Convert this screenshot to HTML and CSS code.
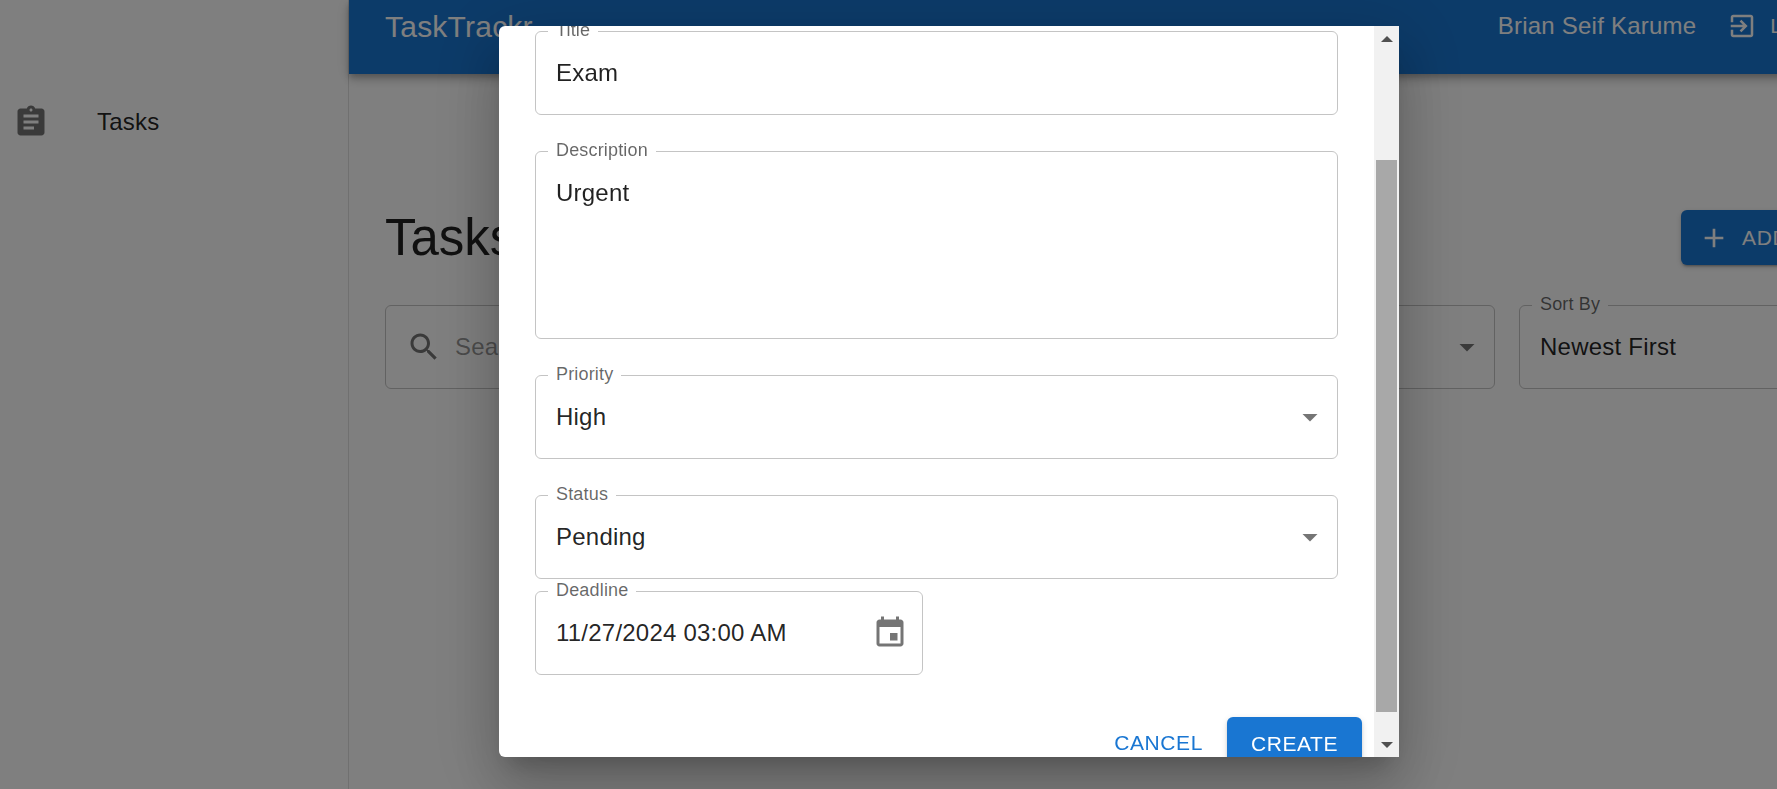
FILE: index.html
```html
<!DOCTYPE html>
<html lang="en">
<head>
    <meta charset="UTF-8">
    <title>TaskTrackr</title>
    <link rel="stylesheet" href="styles.css">
</head>
<body>
    <div class="app">
        <aside class="sidebar">
            <div class="nav-item">
                <svg class="icon-lg nav-icon" viewBox="0 0 24 24"><path d="M19 3h-4.18C14.4 1.84 13.3 1 12 1c-1.3 0-2.4.84-2.82 2H5c-1.1 0-2 .9-2 2v14c0 1.1.9 2 2 2h14c1.1 0 2-.9 2-2V5c0-1.1-.9-2-2-2zm-7 0c.55 0 1 .45 1 1s-.45 1-1 1-1-.45-1-1 .45-1 1-1zm2 14H7v-2h7v2zm3-4H7v-2h10v2zm0-4H7V7h10v2z"/></svg>
                <span>Tasks</span>
            </div>
        </aside>

        <main class="main">
            <header class="topbar">
                <div class="brand">TaskTrackr</div>
                <div class="user">
                    <span class="user-name">Brian Seif Karume</span>
                    <button class="logout">
                        <svg class="icon-md" viewBox="0 0 24 24"><path d="M10.09 15.59L11.5 17l5-5-5-5-1.41 1.41L12.67 11H3v2h9.67l-2.58 2.59zM19 3H5c-1.11 0-2 .9-2 2v4h2V5h14v14H5v-4H3v4c0 1.1.89 2 2 2h14c1.1 0 2-.9 2-2V5c0-1.1-.9-2-2-2z"/></svg>
                        <span>LOGOUT</span>
                    </button>
                </div>
            </header>

            <section class="content">
                <div class="title-row">
                    <h1>Tasks</h1>
                    <button class="btn btn-primary add-btn">
                        <svg class="icon-add" viewBox="0 0 24 24"><path d="M19 13h-6v6h-2v-6H5v-2h6V5h2v6h6v2z"/></svg>
                        <span>ADD TASK</span>
                    </button>
                </div>
                <div class="filters">
                    <div class="field field-search">
                        <svg class="icon-lg muted" viewBox="0 0 24 24"><path d="M15.5 14h-.79l-.28-.27C15.41 12.59 16 11.11 16 9.5 16 5.91 13.09 3 9.5 3S3 5.91 3 9.5 5.91 16 9.5 16c1.61 0 3.09-.59 4.23-1.57l.27.28v.79l5 4.99L20.49 19l-4.99-5zm-6 0C7.01 14 5 11.99 5 9.5S7.01 5 9.5 5 14 7.01 14 9.5 11.99 14 9.5 14z"/></svg>
                        <span class="placeholder">Search tasks</span>
                    </div>
                    <div class="field field-filter">
                        <label>Filter</label>
                        <span class="value">All</span>
                        <svg class="icon-lg muted caret" viewBox="0 0 24 24"><path d="M7 10l5 5 5-5z"/></svg>
                    </div>
                    <div class="field field-filter">
                        <label>Sort By</label>
                        <span class="value">Newest First</span>
                        <svg class="icon-lg muted caret" viewBox="0 0 24 24"><path d="M7 10l5 5 5-5z"/></svg>
                    </div>
                </div>
            </section>
        </main>
    </div>

    <div class="backdrop">
        <div class="dialog">
            <div class="dialog-body">
                <div class="field">
                    <label>Title</label>
                    <span class="value">Exam</span>
                </div>
                <div class="field field-area">
                    <label>Description</label>
                    <span class="value">Urgent</span>
                </div>
                <div class="field">
                    <label>Priority</label>
                    <span class="value">High</span>
                    <svg class="icon-lg muted caret" viewBox="0 0 24 24"><path d="M7 10l5 5 5-5z"/></svg>
                </div>
                <div class="field">
                    <label>Status</label>
                    <span class="value">Pending</span>
                    <svg class="icon-lg muted caret" viewBox="0 0 24 24"><path d="M7 10l5 5 5-5z"/></svg>
                </div>
                <div class="field field-date">
                    <label>Deadline</label>
                    <span class="value">11/27/2024 03:00 AM</span>
                    <svg class="icon-lg muted caret" viewBox="0 0 24 24"><path d="M17 12h-5v5h5v-5zM16 1v2H8V1H6v2H5c-1.11 0-1.99.9-1.99 2L3 19c0 1.1.89 2 2 2h14c1.1 0 2-.9 2-2V5c0-1.1-.9-2-2-2h-1V1h-2zm3 18H5V8h14v11z"/></svg>
                </div>
                <div class="dialog-actions">
                    <button class="btn btn-text">CANCEL</button>
                    <button class="btn btn-primary create-btn">CREATE</button>
                </div>
            </div>
            <div class="scrollbar">
                <div class="arrow arrow-up"></div>
                <div class="track"><div class="thumb"></div></div>
                <div class="arrow arrow-down"></div>
            </div>
        </div>
    </div>
</body>
</html>
```

FILE: styles.css
```css
/* General page */
html, body {
    margin: 0;
    height: 100%;
    overflow: hidden;
}

body {
    background-color: #fff;
    color: rgba(0, 0, 0, 0.87);
    font-family: "Liberation Sans", Arial, sans-serif;
}

svg {
    display: block;
    flex: none;
    fill: currentColor;
}

.icon-lg {
    width: 36px;
    height: 36px;
}

.icon-md {
    width: 30px;
    height: 30px;
}

.icon-add {
    width: 32px;
    height: 32px;
}

.muted {
    color: rgba(0, 0, 0, 0.54);
}

.app {
    display: flex;
    width: 1906px;
    height: 789px;
}

/* Sidebar */
.sidebar {
    flex: none;
    width: 348px;
    padding-top: 104px;
    border-right: 1px solid rgba(0, 0, 0, 0.12);
}

.nav-item {
    display: flex;
    align-items: center;
    gap: 48px;
    padding-left: 13px;
    font-size: 24px;
    letter-spacing: 0.225px;
}

.nav-icon {
    color: rgba(0, 0, 0, 0.54);
}

/* Top bar */
.main {
    flex: 1;
}

.topbar {
    display: flex;
    justify-content: space-between;
    align-items: center;
    height: 52px;
    padding: 0 47px 22px 36px;
    background-color: #1976d2;
    color: #fff;
    box-shadow: 0 3px 6px -1px rgba(0, 0, 0, 0.2), 0 6px 8px 0 rgba(0, 0, 0, 0.14), 0 2px 15px 0 rgba(0, 0, 0, 0.12);
}

.brand {
    padding-top: 2px;
    font-size: 30px;
    letter-spacing: 0.225px;
}

.user {
    display: flex;
    align-items: center;
    gap: 31px;
}

.user-name {
    font-size: 24px;
    letter-spacing: 0.225px;
}

.logout {
    display: flex;
    align-items: center;
    gap: 13px;
    padding: 0;
    border: none;
    background: none;
    color: inherit;
    font: inherit;
    font-size: 21px;
}

/* Tasks section */
.content {
    padding: 136px 36px 0;
}

.title-row {
    display: flex;
    justify-content: space-between;
    align-items: center;
    height: 55px;
    margin-bottom: 40px;
}

h1 {
    margin: 0;
    font-size: 51px;
    font-weight: 400;
}

.btn {
    border: none;
    font-family: inherit;
    font-size: 21px;
    letter-spacing: 0.6px;
    border-radius: 6px;
}

.btn-primary {
    background-color: #1976d2;
    color: #fff;
    box-shadow: 0 3px 2px -2px rgba(0, 0, 0, 0.2), 0 2px 3px 0 rgba(0, 0, 0, 0.14), 0 2px 7px 0 rgba(0, 0, 0, 0.12);
}

.btn-text {
    padding: 0 12px;
    background: none;
    color: #1976d2;
}

.add-btn {
    display: flex;
    align-items: center;
    gap: 12px;
    height: 55px;
    padding: 0 20px 0 17px;
}

.filters {
    display: flex;
    gap: 24px;
}

/* Outlined fields */
.field {
    position: relative;
    flex: none;
    display: flex;
    align-items: center;
    box-sizing: border-box;
    height: 84px;
    padding: 0 20px;
    border: 1px solid #c4c4c4;
    border-radius: 6px;
    background-color: #fff;
}

.field label {
    position: absolute;
    top: -12px;
    left: 12px;
    padding: 0 8px;
    background-color: #fff;
    color: rgba(0, 0, 0, 0.6);
    font-size: 18px;
    line-height: 21px;
    letter-spacing: 0.17px;
}

.value {
    flex: 1;
    font-size: 24px;
    letter-spacing: 0.225px;
}

.placeholder {
    margin-left: 13px;
    color: rgba(0, 0, 0, 0.42);
    font-size: 24px;
    letter-spacing: 0.225px;
}

.caret {
    margin-right: -11px;
}

.field-search {
    flex: 1;
    padding-left: 20px;
}

.field-filter {
    width: 351px;
}

.field-area {
    align-items: flex-start;
    height: 188px;
    padding-top: 27px;
}

.field-date {
    width: 388px;
    margin-top: -24px;
}

.field-date .caret {
    margin-right: -6px;
}

/* Dialog */
.backdrop {
    position: fixed;
    inset: 0;
    padding: 26px 0 0 499px;
    background-color: rgba(0, 0, 0, 0.5);
}

.dialog {
    display: flex;
    width: 900px;
    height: 731px;
    overflow: hidden;
    border-radius: 6px 0 0 6px;
    background-color: #fff;
    box-shadow: 0 16px 22px -10px rgba(0, 0, 0, 0.2), 0 36px 57px 4px rgba(0, 0, 0, 0.14), 0 14px 69px 12px rgba(0, 0, 0, 0.12);
}

.dialog-body {
    flex: 1;
    display: flex;
    flex-direction: column;
    gap: 36px;
    padding: 5px 36px 0;
}

.dialog-actions {
    flex: none;
    display: flex;
    justify-content: flex-end;
    align-items: flex-start;
    gap: 12px;
    margin: 6px -24px 0 0;
}

.dialog-actions .btn {
    flex: none;
    height: 55px;
    padding-bottom: 3px;
}

.create-btn {
    width: 135px;
}

/* Scrollbar drawn by the browser in the original */
.scrollbar {
    flex: none;
    display: flex;
    flex-direction: column;
    width: 25px;
    background-color: #f1f1f1;
}

.arrow {
    flex: none;
    height: 25px;
    display: flex;
    justify-content: center;
    align-items: center;
}

.arrow::before {
    content: "";
    border-left: 6px solid transparent;
    border-right: 6px solid transparent;
}

.arrow-up::before {
    border-bottom: 6px solid #505050;
}

.arrow-down::before {
    border-top: 6px solid #505050;
}

.track {
    flex: 1;
    padding: 109px 2px 20px;
    display: flex;
}

.thumb {
    flex: 1;
    background-color: #a8a8a8;
}
```
